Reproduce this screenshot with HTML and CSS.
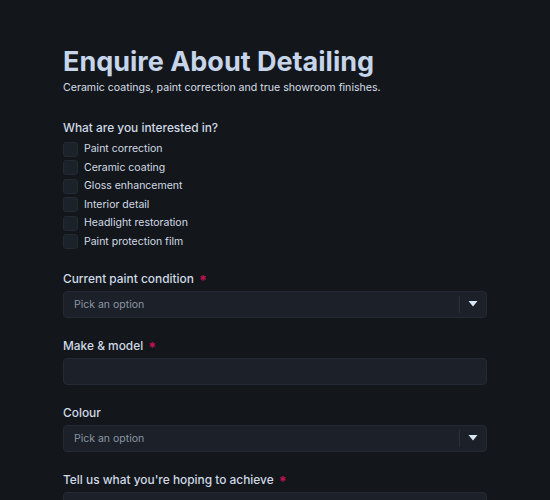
FILE: index.html
```html
<!DOCTYPE html>
<html lang="en">
<head>
<meta charset="utf-8">
<title>Enquire About Detailing</title>
<link rel="stylesheet" href="styles.css">
</head>
<body>
<main class="page">
  <header class="intro">
    <h1 class="title">Enquire About Detailing</h1>
    <p class="lead">Ceramic coatings, paint correction and true showroom finishes.</p>
  </header>

  <form class="form">
    <fieldset class="group">
      <legend class="label">What are you interested in?</legend>
      <div class="checks">
        <label class="check"><span class="box"></span>Paint correction</label>
        <label class="check"><span class="box"></span>Ceramic coating</label>
        <label class="check"><span class="box"></span>Gloss enhancement</label>
        <label class="check"><span class="box"></span>Interior detail</label>
        <label class="check"><span class="box"></span>Headlight restoration</label>
        <label class="check"><span class="box"></span>Paint protection film</label>
      </div>
    </fieldset>

    <div class="field">
      <div class="label">Current paint condition <span class="req">*</span></div>
      <div class="select">
        <span class="placeholder">Pick an option</span>
        <span class="caret"><svg width="10" height="6" viewBox="0 0 10 6"><path d="M0.5 0h9L5 5.5z" fill="#dbe6f3"/></svg></span>
      </div>
    </div>

    <div class="field">
      <div class="label">Make &amp; model <span class="req">*</span></div>
      <div class="input"></div>
    </div>

    <div class="field">
      <div class="label">Colour</div>
      <div class="select">
        <span class="placeholder">Pick an option</span>
        <span class="caret"><svg width="10" height="6" viewBox="0 0 10 6"><path d="M0.5 0h9L5 5.5z" fill="#dbe6f3"/></svg></span>
      </div>
    </div>

    <div class="field">
      <div class="label">Tell us what you're hoping to achieve <span class="req">*</span></div>
      <div class="textarea"></div>
    </div>
  </form>
</main>
</body>
</html>
```
FILE: styles.css
```css
html, body {
  margin: 0;
  background: #13171c;
  height: 100%;
  overflow: hidden;
}

body {
  font-family: Inter, "Noto Sans", sans-serif;
  color: #d2dae4;
}

.page {
  width: 424px;
  margin-left: 63px;
  padding-top: 44px;
}

.title {
  margin: 0;
  font-size: 27px;
  font-weight: 700;
  line-height: 36px;
  color: #c6d5ea;
}

.lead {
  margin: 0;
  font-size: 10.6px;
  line-height: 16px;
  color: #d6dde6;
}

.form {
  margin-top: 24px;
  display: flex;
  flex-direction: column;
  gap: 21px;
}

.group {
  border: 0;
  margin: 0;
  padding: 0;
}

.label {
  font-size: 11.9px;
  line-height: 16px;
  font-weight: 500;
  color: #d0d9e5;
  padding: 0;
}

.group .label {
  margin-bottom: 5px;
}

/* required marker, nudged down to sit on the label's midline */
.req {
  color: #c0124c;
  font-size: 14px;
  font-weight: 700;
  line-height: 10px;
  margin-left: 2px;
  vertical-align: -3px;
}

.checks {
  display: flex;
  flex-direction: column;
  gap: 2.6px;
}

.check {
  display: flex;
  align-items: center;
  gap: 6px;
  font-size: 10.5px;
  line-height: 16px;
  color: #d2dae4;
}

.box {
  width: 15px;
  height: 15px;
  border-radius: 3px;
  background: #1c222a;
  border: 1px solid #232a33;
  box-sizing: border-box;
}

.field {
  display: flex;
  flex-direction: column;
}

.field + .field {
  margin-top: -1px;
}

.field .label {
  margin-bottom: 4px;
}

.select,
.input,
.textarea {
  box-sizing: border-box;
  height: 27px;
  background: #1b2029;
  border: 1px solid #242a34;
  border-radius: 4px;
}

.select {
  display: flex;
  align-items: center;
  justify-content: space-between;
  padding-left: 10px;
}

.placeholder {
  font-size: 10.5px;
  color: #8c96a3;
}

.caret {
  display: flex;
  align-items: center;
  justify-content: center;
  width: 26px;
  height: 17px;
  border-left: 1px solid #2a313b;
}

.textarea {
  height: 80px;
}
```
